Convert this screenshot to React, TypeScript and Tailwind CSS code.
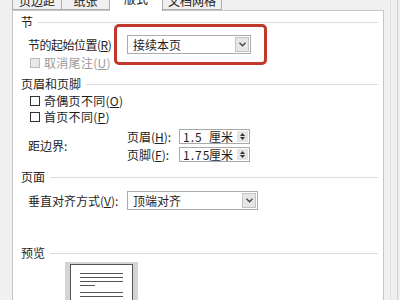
import React from "react";

const font = { fontFamily: '"Noto Sans CJK SC", "Noto Sans", sans-serif' };

function Header({ label }: { label: string }) {
  return (
    <div className="flex h-[16px] items-center pl-[8px] pr-[5px]">
      <span className="text-[12px] leading-none text-[#1e1e1e]">{label}</span>
      <div className="ml-[5px] h-px flex-1 bg-[#dcdcdc]" />
    </div>
  );
}

function Check({ label, disabled }: { label: React.ReactNode; disabled?: boolean }) {
  return (
    <div className="flex h-[14px] items-center pl-[17px]">
      <div
        className={
          disabled
            ? "h-[10px] w-[10px] border border-[#bcbcbc] bg-[#e8e8e8]"
            : "h-[10px] w-[10px] border border-[#333] bg-white"
        }
      />
      <span
        className={
          "ml-[4px] text-[12px] leading-none tracking-[0.3px] " + (disabled ? "text-[#9a9a9a]" : "text-[#1e1e1e]")
        }
      >
        {label}
      </span>
    </div>
  );
}

function Chevron() {
  return (
    <svg width="7" height="5" viewBox="0 0 7 5">
      <path d="M0.5 0.8 L3.5 3.8 L6.5 0.8" fill="none" stroke="#444" strokeWidth="1.3" />
    </svg>
  );
}

function Select({ value, width }: { value: string; width: number }) {
  return (
    <div
      className="flex h-[19px] items-center border border-[#acacac] bg-white"
      style={{ width }}
    >
      <span className="ml-[5px] flex-1 text-[12px] leading-none text-[#1e1e1e]">{value}</span>
      <div className="mr-[1px] flex h-[15px] w-[14px] items-center justify-center border border-[#c4c4c4] bg-[#e6e6e6]">
        <Chevron />
      </div>
    </div>
  );
}

function Spin({ num }: { num: string }) {
  return (
    <div className="flex h-[15px] w-[71px] items-center border border-[#a8a8a8] bg-white">
      <span className="ml-[3px] w-[26px] whitespace-pre text-[12px] leading-none tracking-[1px] text-[#1e1e1e]">{num}</span>
      <span className="flex-1 text-[12px] leading-none text-[#1e1e1e]">厘米</span>
      <div className="mr-[1px] flex h-[11px] w-[11px] flex-col items-center justify-center gap-[1px] bg-[#e4e4e4]">
        <svg width="5" height="3" viewBox="0 0 5 3">
          <path d="M0 3 L2.5 0 L5 3 Z" fill="#333" />
        </svg>
        <svg width="5" height="3" viewBox="0 0 5 3">
          <path d="M0 0 L2.5 3 L5 0 Z" fill="#333" />
        </svg>
      </div>
    </div>
  );
}

export default function App() {
  return (
    <div className="relative h-[300px] w-[400px] overflow-hidden bg-[#f0f0f0]" style={font}>
      {/* tabs */}
      <div className="flex h-[10px] items-end pl-[12px]">
        <div className="flex h-[18px] w-[50px] -mt-[8px] items-center justify-center border border-[#adadad] bg-[#f0f0f0] text-[12px] leading-none text-[#222]">
          页边距
        </div>
        <div className="flex h-[18px] w-[48px] -mt-[8px] items-center justify-center border border-l-0 border-[#adadad] bg-[#f0f0f0] text-[12px] leading-none text-[#222]">
          纸张
        </div>
        <div className="relative z-10 flex h-[20px] w-[53px] -mb-[1px] items-center justify-center border border-b-0 border-l-0 border-[#adadad] bg-white text-[12px] leading-none text-[#222]">
          <span className="-mt-[6px]">版式</span>
        </div>
        <div className="flex h-[18px] w-[59px] -mt-[8px] items-center justify-center border border-l-0 border-[#adadad] bg-[#f0f0f0] text-[12px] leading-none text-[#222]">
          文档网格
        </div>
      </div>

      <div className="flex">
        {/* panel */}
        <div className="ml-[12px] h-[300px] w-[372px] border border-[#c6c6c6] bg-white">
          <div className="mt-[3px]">
            <Header label="节" />
          </div>
          <div className="mt-[5px] flex h-[19px] items-center">
            <span className="ml-[15px] w-[99px] whitespace-nowrap text-[12px] leading-none tracking-[-0.5px] text-[#1e1e1e]">节的起始位置(<u>R</u>)</span>
            <Select value="接续本页" width={124} />
          </div>
          <div className="mt-[2px]">
            <Check label={<>取消尾注(<u>U</u>)</>} disabled />
          </div>

          <div className="mt-[6px]">
            <Header label="页眉和页脚" />
          </div>
          <div className="mt-[2px]">
            <Check label={<>奇偶页不同(<u>O</u>)</>} />
          </div>
          <div className="mt-[2px]">
            <Check label={<>首页不同(<u>P</u>)</>} />
          </div>

          <div className="mt-[5px] flex items-center">
            <span className="ml-[15px] w-[99px] text-[12px] leading-none text-[#1e1e1e]">距边界:</span>
            <div className="flex flex-col gap-[3px]">
              <div className="flex items-center">
                <span className="w-[52px] text-[12px] leading-none text-[#1e1e1e]">页眉(<u>H</u>):</span>
                <Spin num="1.5" />
              </div>
              <div className="flex items-center">
                <span className="w-[52px] text-[12px] leading-none text-[#1e1e1e]">页脚(<u>F</u>):</span>
                <Spin num="1.75" />
              </div>
            </div>
          </div>

          <div className="mt-[7px]">
            <Header label="页面" />
          </div>
          <div className="mt-[6px] flex h-[19px] items-center">
            <span className="ml-[15px] w-[99px] whitespace-nowrap text-[12px] leading-none text-[#1e1e1e]">垂直对齐方式(<u>V</u>):</span>
            <Select value="顶端对齐" width={131} />
          </div>

          <div className="mt-[35px]">
            <Header label="预览" />
          </div>
          <div className="ml-[52px] mt-[1px] w-[73px] bg-[#d4d4d4] px-[5px] pt-[2px]">
            <div className="h-[40px] border border-[#555] bg-white px-[9px] pt-[8px]">
              <div className="flex flex-col gap-[3px]">
                <div className="h-px w-[43px] bg-[#555]" />
                <div className="h-px w-[43px] bg-[#555]" />
                <div className="h-px w-[43px] bg-[#555]" />
                <div className="h-px w-[15px] bg-[#555]" />
                <div className="mt-[3px] h-px w-[43px] bg-[#555]" />
                <div className="h-px w-[43px] bg-[#555]" />
              </div>
            </div>
          </div>
        </div>

        {/* right edge */}
        <div className="flex h-[300px] -mt-[10px]">
          <div className="w-[6px]" />
          <div className="h-full w-px bg-[#dedede]" />
          <div className="w-[6px]" />
          <div className="h-full w-px bg-[#d0d0d0]" />
        </div>
      </div>

      {/* red annotation */}
      <div className="absolute left-[114px] top-[24px] h-[41px] w-[153px] rounded-[5px] border-[3px] border-[#c0392b]" />
    </div>
  );
}
